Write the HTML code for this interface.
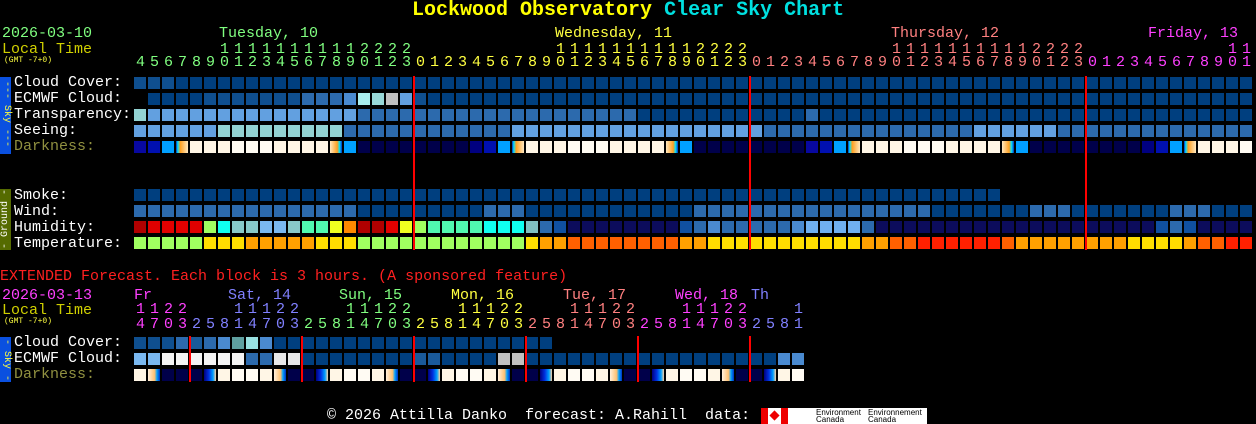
<!DOCTYPE html>
<html><head><meta charset="utf-8"><style>
html,body{margin:0;padding:0;background:#000;width:1256px;height:424px;overflow:hidden}
body{position:relative;font-family:"Liberation Mono",monospace;font-size:15px;line-height:15px;color:#fff}
.t{position:absolute;white-space:pre}
.c{position:absolute;width:12px;height:12px}
.r{position:absolute;width:2px;background:#f00}
.small{font-size:8px;line-height:8px;color:#ffff40}
</style></head><body>
<div class="t" style="left:412px;top:1px;font-size:20px;line-height:20px;font-weight:bold"><span style="color:#ffff00">Lockwood Observatory</span> <span style="color:#00e0e0">Clear Sky Chart</span></div>
<div class="t" style="left:2px;top:26px;color:#80ff80">2026-03-10</div>
<div class="t" style="left:2px;top:42px;color:#d0d000">Local Time</div>
<div class="t small" style="left:4px;top:57px">(GMT -7+0)</div>
<div class="t" style="left:219px;top:26px;color:#80ff80">Tuesday, 10</div>
<div class="t" style="left:555px;top:26px;color:#ffff40">Wednesday, 11</div>
<div class="t" style="left:891px;top:26px;color:#ff8080">Thursday, 12</div>
<div class="t" style="left:1148px;top:26px;color:#ff40ff">Friday, 13</div>

<div style="position:absolute;left:0;top:77px;width:11px;height:77px;background:#0a50e0"></div>
<div class="t" style="left:-29px;top:109px;width:70px;font-size:10px;line-height:10px;color:#ffff40;transform:rotate(90deg);text-align:center">--- Sky ---</div>
<div style="position:absolute;left:0;top:189px;width:11px;height:61px;background:#556b00"></div>
<div class="t" style="left:-29px;top:214px;width:70px;font-size:10px;line-height:10px;color:#fff;transform:rotate(-90deg);text-align:center">- Ground -</div>

<div class="t" style="left:14px;top:75px">Cloud Cover:</div>
<div class="t" style="left:14px;top:91px">ECMWF Cloud:</div>
<div class="t" style="left:14px;top:107px">Transparency:</div>
<div class="t" style="left:14px;top:123px">Seeing:</div>
<div class="t" style="left:14px;top:139px;color:#909040">Darkness:</div>
<div class="t" style="left:14px;top:188px">Smoke:</div>
<div class="t" style="left:14px;top:204px">Wind:</div>
<div class="t" style="left:14px;top:220px">Humidity:</div>
<div class="t" style="left:14px;top:236px">Temperature:</div>

<div class="t" style="left:0px;top:269px;color:#ff2020">EXTENDED Forecast. Each block is 3 hours. (A sponsored feature)</div>
<div class="t" style="left:2px;top:288px;color:#ff40ff">2026-03-13</div>
<div class="t" style="left:2px;top:303px;color:#d0d000">Local Time</div>
<div class="t small" style="left:4px;top:318px">(GMT -7+0)</div>
<div class="t" style="left:134px;top:288px;color:#ff40ff">Fr</div>
<div class="t" style="left:228px;top:288px;color:#8080ff">Sat, 14</div>
<div class="t" style="left:339px;top:288px;color:#80ff80">Sun, 15</div>
<div class="t" style="left:451px;top:288px;color:#ffff40">Mon, 16</div>
<div class="t" style="left:563px;top:288px;color:#ff8080">Tue, 17</div>
<div class="t" style="left:675px;top:288px;color:#ff40ff">Wed, 18</div>
<div class="t" style="left:751px;top:288px;color:#8080ff">Th</div>
<div style="position:absolute;left:0;top:337px;width:11px;height:45px;background:#0a50e0"></div>
<div class="t" style="left:-14px;top:354px;width:40px;font-size:10px;line-height:10px;color:#ffff40;transform:rotate(90deg);text-align:center">- Sky -</div>
<div class="t" style="left:14px;top:335px">Cloud Cover:</div>
<div class="t" style="left:14px;top:351px">ECMWF Cloud:</div>
<div class="t" style="left:14px;top:367px;color:#909040">Darkness:</div>

<div class="t" style="left:327px;top:408px">© 2026 Attilla Danko  forecast: A.Rahill  data:</div>
<div style="position:absolute;left:761px;top:408px;width:27px;height:16px;background:#fff">
 <div style="position:absolute;left:0;top:0;width:7px;height:16px;background:#e00"></div>
 <div style="position:absolute;right:0;top:0;width:7px;height:16px;background:#e00"></div>
 <div style="position:absolute;left:9px;top:3px;width:9px;height:9px;background:#e00;transform:rotate(45deg) scale(.8)"></div>
</div>
<div style="position:absolute;left:788px;top:408px;width:139px;height:16px;background:#fff;font-family:'Liberation Sans',sans-serif;font-size:8px;line-height:7px;color:#000">
 <div style="position:absolute;left:28px;top:1px">Environment<br>Canada</div>
 <div style="position:absolute;left:80px;top:1px">Environnement<br>Canada</div>
</div>

<div id="g"></div>
<script>
var g=document.getElementById('g'),h='';
function cell(x,y,c){if(!c)return;h+='<div class="c" style="left:'+x+'px;top:'+y+'px;background:'+c+'"></div>';}
function txt(x,y,s,col){h+='<div class="t" style="left:'+x+'px;top:'+y+'px;color:'+col+'">'+s+'</div>';}
var A='#003f7f',A2='#0f4f8f',B='#2c6aad',C='#62a0e0',D='#93d3d3',L='#4a8ad0';
function fill(n,def){var a=[];for(var i=0;i<n;i++)a.push(def);return a;}
function set(a,f,t,c){for(var i=f;i<=t;i++)a[i]=c;}
var dc=['#80ff80','#ffff40','#ff8080','#ff40ff'];
for(var i=0;i<80;i++){var hr=(4+i)%24,d=Math.floor((i+4)/24);var x=134+14*i+2;
 if(hr>=10)txt(x,42,String(Math.floor(hr/10)),dc[d]);txt(x,55,String(hr%10),dc[d]);}
var cc=fill(80,A);set(cc,0,2,'#0f4f8f');
var ec=fill(80,A);ec[0]=null;set(ec,5,11,A2);set(ec,12,14,B);ec[15]=L;ec[16]='#a8ecec';ec[17]='#98d8d8';ec[18]='#c0c0c0';ec[19]=C;ec[20]=A2;
var tr=fill(80,A);tr[0]=D;set(tr,1,15,C);set(tr,16,35,B);set(tr,36,47,A);tr[48]=B;
var se=fill(80,B);set(se,0,5,C);set(se,6,14,D);set(se,27,44,C);set(se,60,65,C);
var N='#00004a',M='#000080',P='#0808a0',Q='#0010b0',T='#00a0ff';
var O='linear-gradient(to right,#0030c0 0,#00e0ff 15%,#ffa020 35%,#ffe8c0 100%)';
var O2='linear-gradient(to right,#ffe8c0 0,#ffa020 60%,#00e0ff 80%,#0030c0 100%)';
var W='#fff6e6',W2='#fffbf3';
var dk=fill(80,N);
function day(b,e){dk[b-2]=P;dk[b-1]=Q;dk[b]=T;dk[b+1]=O;for(var i=b+2;i<e&&i<80;i++)dk[i]=(i-b>4&&e-i>4)?W2:W;if(e<80)dk[e]=O2;if(e+1<80)dk[e+1]=T;}
day(2,14);day(26,38);day(50,62);day(74,86);dk[0]=P;dk[1]=Q;dk[24]=M;dk[72]=M;
var sm=fill(80,null);set(sm,0,61,A);
var wi=fill(80,A);set(wi,0,15,B);set(wi,25,27,B);set(wi,40,56,B);set(wi,64,66,B);set(wi,74,76,B);
var R1='#b00000',R2='#e00000',G='#a0ff60',Y='#f0ff20',Mi='#50f8b0',Cy='#10fff0',Te='#88c8c8',Bl='#7ab8f0',V='#0c0c5c',DB='#1050a0',LB='#70b0f0';
var hu=[R1,R2,R2,R2,R2,G,Cy,Te,Te,Bl,Bl,Te,Mi,Mi,Y,'#ff8800',R1,R1,R2,Y,G,Mi,Mi,Mi,Mi,Cy,Cy,Cy,'#80c0c0',B,DB,V,V,V,V,V,V,V,V,DB,B,L,B,B,B,B,B,L,LB,LB,LB,LB,B];
for(var i=53;i<80;i++)hu.push(V);hu[73]=DB;hu[74]=B;hu[75]=DB;
var G2='#a0ff60',Yy='#ffdd00',Or='#ffa000',O6='#ff6000',Rd='#ff2000';
var te=fill(80,G2);set(te,5,7,Yy);set(te,8,12,Or);set(te,13,15,Yy);set(te,28,28,Yy);set(te,29,30,Or);set(te,31,38,O6);set(te,39,40,Or);set(te,41,51,Yy);set(te,52,53,Or);set(te,54,55,O6);set(te,56,61,Rd);te[62]=O6;set(te,63,70,Or);set(te,71,74,Yy);te[75]=Or;set(te,76,77,O6);set(te,78,79,Rd);
var rows=[[cc,77],[ec,93],[tr,109],[se,125],[dk,141],[sm,189],[wi,205],[hu,221],[te,237]];
rows.forEach(function(r){for(var i=0;i<80;i++)cell(134+14*i,r[1],r[0][i]);});
[413,749,1085].forEach(function(x){h+='<div class="r" style="left:'+x+'px;top:76px;height:174px"></div>';});
var ec2=['#ff40ff','#8080ff','#80ff80','#ffff40','#ff8080','#ff40ff','#8080ff'];
for(var i=0;i<48;i++){var hr=(14+3*i)%24,d=Math.floor((i+4)/8);var x=134+14*i+2;
 if(hr>=10)txt(x,302,String(Math.floor(hr/10)),ec2[d]);txt(x,317,String(hr%10),ec2[d]);}
var xc=fill(48,null);set(xc,0,29,A);set(xc,0,2,A2);xc[3]=B;xc[4]='#1a5a9a';xc[5]=B;xc[6]=L;xc[7]='#5fa0a0';xc[8]='#98e0e0';xc[9]=L;
var xe=fill(48,A);set(xe,0,1,Bl);set(xe,2,7,'#f4f4f4');set(xe,8,9,B);set(xe,10,11,'#e8e8e8');set(xe,20,21,'#1a5a9a');set(xe,26,27,'#c0c0c0');set(xe,46,47,L);
var xd=fill(48,N);
var XB='linear-gradient(to right,#000080 0,#0030e0 40%,#00a0ff 75%,#ffd0a0 100%)';
var XO='linear-gradient(to right,#fff0dc 0,#ffc070 55%,#00a0ff 75%,#0030c0 100%)';
for(var d=0;d<6;d++){var b=4+8*d;xd[b+1]=XB;xd[b+2]=W;xd[b+3]=W2;xd[b+4]=W2;xd[b+5]=W;xd[b+6]=XO;}
xd[0]=W;xd[1]=XO;
for(var i=0;i<48;i++){cell(134+14*i,337,xc[i]);cell(134+14*i,353,xe[i]);cell(134+14*i,369,xd[i]);}
[189,301,413,525,637,749].forEach(function(x){h+='<div class="r" style="left:'+x+'px;top:336px;height:46px"></div>';});
g.innerHTML=h;
</script>
</body></html>
